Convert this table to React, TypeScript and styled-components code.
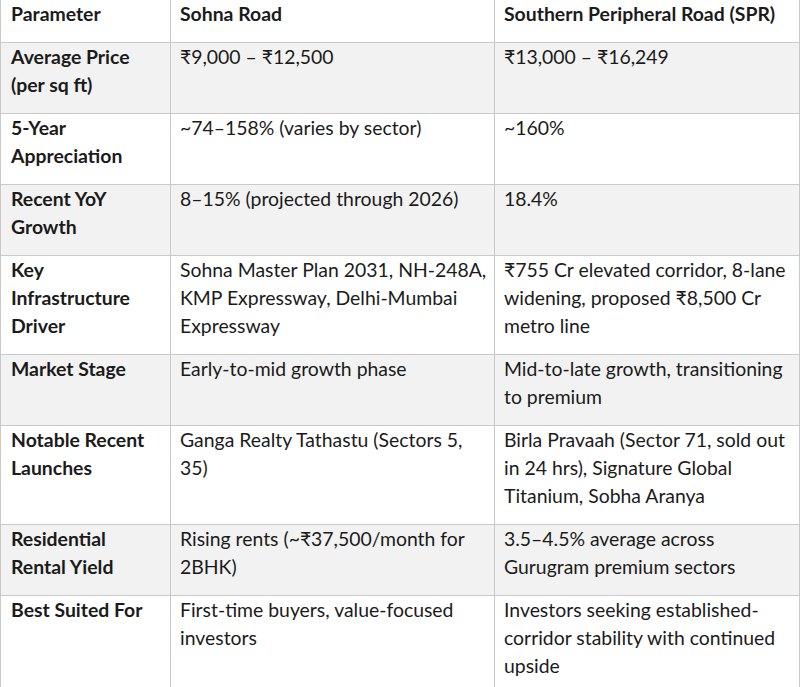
import React from "react";
import styled, { createGlobalStyle } from "styled-components";

const GlobalStyle = createGlobalStyle`
  html, body {
    margin: 0;
    padding: 0;
    background: #ffffff;
  }
  body {
    font-family: Lato, "Noto Sans", "Liberation Sans", sans-serif;
    color: #1b1b1b;
  }
`;

type RowData = { label: string; sohna: string; spr: string };

const header: RowData = {
  label: "Parameter",
  sohna: "Sohna Road",
  spr: "Southern Peripheral Road (SPR)",
};

const rows: RowData[] = [
  { label: "Average Price (per sq ft)", sohna: "₹9,000 – ₹12,500", spr: "₹13,000 – ₹16,249" },
  { label: "5-Year Appreciation", sohna: "~74–158% (varies by sector)", spr: "~160%" },
  { label: "Recent YoY Growth", sohna: "8–15% (projected through 2026)", spr: "18.4%" },
  {
    label: "Key Infrastructure Driver",
    sohna: "Sohna Master Plan 2031, NH-248A, KMP Expressway, Delhi-Mumbai Expressway",
    spr: "₹755 Cr elevated corridor, 8-lane widening, proposed ₹8,500 Cr metro line",
  },
  {
    label: "Market Stage",
    sohna: "Early-to-mid growth phase",
    spr: "Mid-to-late growth, transitioning to premium",
  },
  {
    label: "Notable Recent Launches",
    sohna: "Ganga Realty Tathastu (Sectors 5, 35)",
    spr: "Birla Pravaah (Sector 71, sold out in 24 hrs), Signature Global Titanium, Sobha Aranya",
  },
  {
    label: "Residential Rental Yield",
    sohna: "Rising rents (~₹37,500/month for 2BHK)",
    spr: "3.5–4.5% average across Gurugram premium sectors",
  },
  {
    label: "Best Suited For",
    sohna: "First-time buyers, value-focused investors",
    spr: "Investors seeking established-corridor stability with continued upside",
  },
];

const Table = styled.div`
  width: 800px;
  border-left: 1px solid #c9c9c9;
  box-sizing: border-box;
`;

const Row = styled.div<{ $shaded?: boolean }>`
  display: grid;
  grid-template-columns: 170px 324px 305px;
  background: ${(p) => (p.$shaded ? "#f2f2f2" : "#ffffff")};
`;

const Cell = styled.div<{ $bold?: boolean; $first?: boolean }>`
  box-sizing: border-box;
  border-right: 1px solid #c9c9c9;
  border-bottom: 1px solid #c9c9c9;
  padding: 0 ${(p) => (p.$first ? "10px" : "3px")} 14px ${(p) => (p.$first ? "10px" : "9px")};
  font-size: 19.4px;
  line-height: 28px;
  font-weight: ${(p) => (p.$bold ? 700 : 400)};
`;

export default function App() {
  return (
    <>
      <GlobalStyle />
      <Table>
        <Row>
          <Cell $bold $first>
            {header.label}
          </Cell>
          <Cell $bold>{header.sohna}</Cell>
          <Cell $bold>{header.spr}</Cell>
        </Row>
        {rows.map((r, i) => (
          <Row key={r.label} $shaded={i % 2 === 0}>
            <Cell $bold $first>
              {r.label}
            </Cell>
            <Cell>{r.sohna}</Cell>
            <Cell>{r.spr}</Cell>
          </Row>
        ))}
      </Table>
    </>
  );
}
